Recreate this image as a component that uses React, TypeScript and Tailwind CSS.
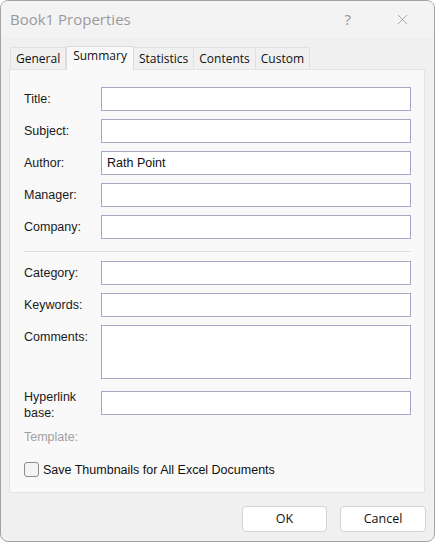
import { X } from 'lucide-react';

const tabs = ['General', 'Summary', 'Statistics', 'Contents', 'Custom'];

const labelFont = { fontFamily: '"Liberation Sans", Arial, sans-serif' };

function Field({ label, tall, mt = 'mt-2' }: { label: string; tall?: boolean; mt?: string }) {
  return (
    <div className={`flex items-start ${mt}`}>
      <div className="w-[77px] pt-[5px] text-[12.5px] leading-[14px] text-[#1a1a1a]">{label}</div>
      <div
        className={`w-[310px] border border-[#a8a8c6] bg-white ${tall ? 'h-[54px]' : 'h-[24px]'}`}
      />
    </div>
  );
}

export default function App() {
  return (
    <div
      className="w-[435px] h-[542px] bg-[#f0f0f0] border border-[#a3a3a3] rounded-[8px] overflow-hidden flex flex-col"
      style={labelFont}
    >
      {/* Title bar */}
      <div className="h-[37px] bg-[#f3f3f3] flex items-center pl-[9px] shrink-0">
        <span className="text-[15px] text-[#9a9a9a]" style={{ fontFamily: '"Open Sans", "Noto Sans", sans-serif' }}>
          Book1 Properties
        </span>
        <span className="ml-auto mr-[43px] text-[15px] text-[#9a9a9a]" style={{ fontFamily: '"Noto Sans", sans-serif' }}>
          ?
        </span>
        <X className="mr-[23px] text-[#8a8a8a]" size={17} strokeWidth={1} />
      </div>

      {/* Tabs */}
      <div className="flex items-end pl-[9px] mt-[8px] h-[23px] shrink-0" style={{ fontFamily: '"Open Sans", "Noto Sans", sans-serif' }}>
        {tabs.map((t) => {
          const active = t === 'Summary';
          return (
            <div
              key={t}
              className={
                active
                  ? 'relative z-10 h-[24px] -mb-px px-[6px] bg-[#f9f9f9] border border-b-0 border-[#d9d9d9] text-[12px] leading-[18px] text-[#111]'
                  : 'h-[22px] px-[5px] bg-[#f0f0f0] border border-b-0 border-l-0 first:border-l border-[#e0e0e0] text-[12px] leading-[22px] text-[#111]'
              }
            >
              {t}
            </div>
          );
        })}
      </div>

      {/* Panel */}
      <div className="ml-[8px] mr-[9px] h-[424px] bg-[#f9f9f9] border border-[#e3e3e3] pl-[14px] pt-[17px] shrink-0">
        <Field label="Title:" mt="mt-0" />
        <Field label="Subject:" />
        <div className="flex items-start mt-2">
          <div className="w-[77px] pt-[5px] text-[12.5px] leading-[14px] text-[#1a1a1a]">Author:</div>
          <div className="w-[310px] h-[24px] border border-[#a8a8c6] bg-white px-[5px] text-[12.5px] leading-[22px] text-[#111]">
            Rath Point
          </div>
        </div>
        <Field label="Manager:" />
        <Field label="Company:" />

        <div className="w-[387px] h-px bg-[#dedede] mt-[12px]" />

        <Field label="Category:" mt="mt-[9px]" />
        <Field label="Keywords:" />
        <Field label="Comments:" tall mt="mt-[8px]" />
        <div className="flex items-start mt-[12px]">
          <div className="w-[77px] -mt-[2px] text-[12.5px] leading-[16px] text-[#1a1a1a]">
            Hyperlink
            <br />
            base:
          </div>
          <div className="w-[310px] h-[24px] border border-[#a8a8c6] bg-white" />
        </div>
        <div className="mt-[9px] text-[12.5px] leading-[14px] text-[#a0a0a0]">Template:</div>

        <label className="flex items-center mt-[18px] gap-[4px]">
          <span className="w-[15px] h-[15px] rounded-[3px] border border-[#8c8c8c] bg-[#f4f4f4]" />
          <span className="text-[12.5px] leading-[14px] text-[#111]">Save Thumbnails for All Excel Documents</span>
        </label>
      </div>

      {/* Buttons */}
      <div className="flex justify-end gap-[13px] mt-[13px] pr-[8px]" style={{ fontFamily: '"Open Sans", "Noto Sans", sans-serif' }}>
        <button className="w-[85px] h-[26px] bg-white border border-[#d3d3d3] rounded-[4px] text-[12.5px] text-[#111]">OK</button>
        <button className="w-[86px] h-[26px] bg-white border border-[#d3d3d3] rounded-[4px] text-[12.5px] text-[#111]">Cancel</button>
      </div>
    </div>
  );
}
